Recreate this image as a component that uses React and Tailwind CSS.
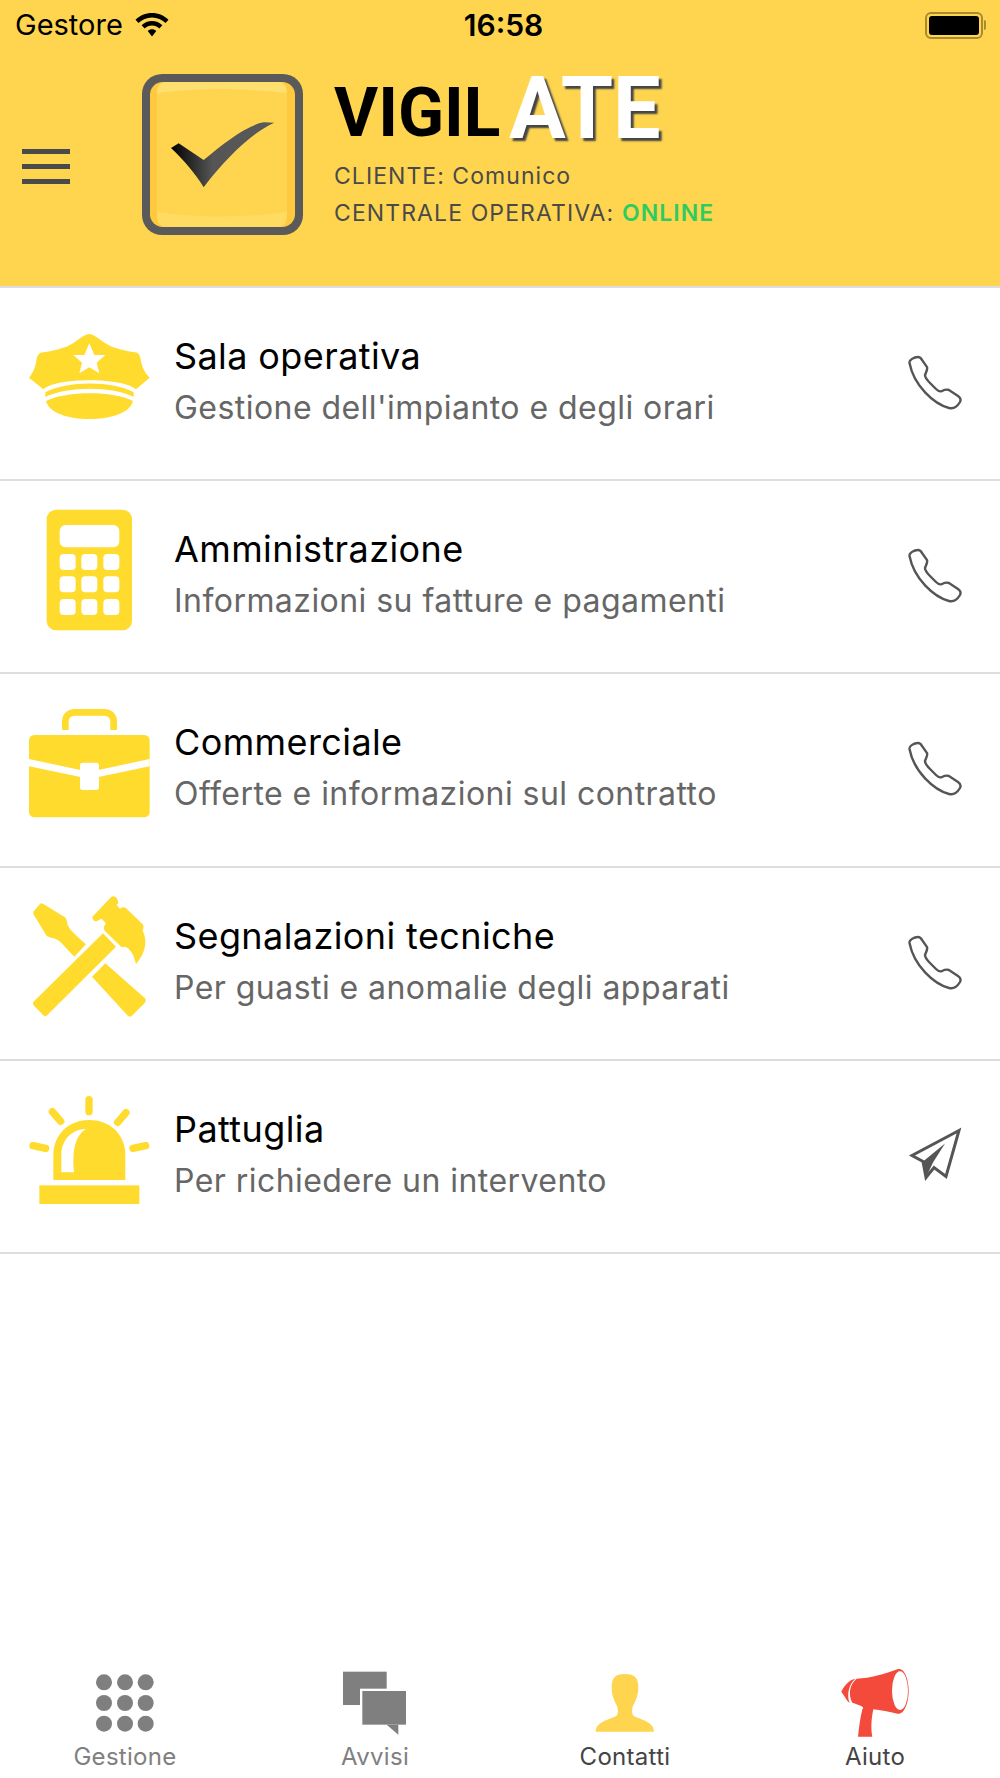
import React from "react";

const YELLOW = "#ffdb2d";

function HatIcon() {
  return (
    <svg width="160" height="160" viewBox="0 -48 480 480">
      <path fill={YELLOW} d="M238 42C225 42 205 60 185 72C165 85 130 92 100 97C88 98 82 105 80 118C76 145 68 160 57 173L100 208C140 172 336 172 378 208L419 173C405 160 395 140 392 118C390 105 385 98 375 97C345 92 310 85 290 72C270 60 250 42 238 42Z" />
      <polygon fill="#fff" points="238,70 253,105 286,105 260,128 268,160 238,142 208,160 216,128 190,105 223,105" />
      <path fill={YELLOW} d="M106 217C170 182 310 182 371 217V231C310 198 170 198 106 231Z" />
      <path fill={YELLOW} d="M108 243C170 212 310 212 369 243C360 280 300 297 238 297C175 297 118 280 108 243Z" />
    </svg>
  );
}

function CalculatorIcon() {
  const keys = [];
  [702, 769, 837].forEach((y) => {
    [149, 214, 280].forEach((x) => {
      keys.push(<rect key={`${x}-${y}`} x={x} y={y} width="48" height="48" rx="12" fill="#fff" />);
    });
  });
  return (
    <svg width="160" height="160" viewBox="0 531 480 480">
      <rect x="110" y="569" width="256" height="362" rx="28" fill={YELLOW} />
      <rect x="149" y="615" width="179" height="67" rx="18" fill="#fff" />
      {keys}
    </svg>
  );
}

function BriefcaseIcon() {
  return (
    <svg width="160" height="160" viewBox="0 0 480 480">
      <path fill="none" stroke={YELLOW} strokeWidth="20" d="M166 120V95C166 75 180 67 195 67H282C298 67 311 75 311 95V120" />
      <rect x="57" y="135" width="362" height="247" rx="16" fill={YELLOW} />
      <polygon fill="#fff" points="57,207 215,241 215,262 57,229" />
      <polygon fill="#fff" points="419,207 262,241 262,262 419,229" />
      <rect x="210" y="218" width="57" height="82" rx="8" fill="#fff" />
    </svg>
  );
}

function ToolsIcon() {
  return (
    <svg width="160" height="160" viewBox="0 579 480 480">
      <path fill={YELLOW} d="M70 665L90 642Q95 638 100 642L165 682Q172 690 172 700C175 715 185 725 228 763L193 800L155 760C140 745 130 745 118 742Q108 738 105 730L70 672Z" />
      <path fill={YELLOW} d="M286 820L405 925Q410 932 405 938L365 978Q358 982 352 976L246 860Z" />
      <path fill={YELLOW} d="M279 730L318 770L112 975Q106 982 100 976L72 947Q66 940 72 934Z" />
      <path fill={YELLOW} d="M250 690Q245 682 250 677L303 622Q310 615 318 622L324 632Q326 640 320 645L330 656Q340 648 350 656L398 703Q403 710 398 722C412 750 410 785 378 822C370 790 360 775 345 770L335 772L284 722Q278 712 288 700L274 686L262 693Q255 696 250 690Z" />
    </svg>
  );
}

function SirenIcon() {
  return (
    <svg width="160" height="160" viewBox="0 -12 480 480">
      <path fill={YELLOW} d="M130 300V225C130 160 180 120 238 120C296 120 346 160 346 225V300Z" />
      <path fill="#fff" d="M154 277V225C154 180 185 148 228 147C200 165 185 200 192 277Z" />
      <rect x="88" y="316" width="300" height="56" fill={YELLOW} />
      <g stroke={YELLOW} strokeWidth="22" strokeLinecap="round">
        <line x1="237" y1="59" x2="237" y2="95" />
        <line x1="127" y1="95" x2="152" y2="124" />
        <line x1="348" y1="98" x2="323" y2="127" />
        <line x1="69" y1="197" x2="107" y2="205" />
        <line x1="407" y1="197" x2="369" y2="205" />
      </g>
    </svg>
  );
}

function PhoneIcon() {
  return (
    <svg width="80" height="80" viewBox="0 0 80 80" fill="none" stroke="#555" strokeWidth="2.4">
      <path d="M19.5 23C19 20 24 17 28 17C30 17 31 18 32 20L37 27C38 29 36 32 35 35C35 38 37 40 40 43L46 49C48 51 50 52 52 51C54 50 56 49 59 50L68 56C71 58 71 60 70 62C67 67 63 69 59 68C44 64 24 46 19.5 23Z" />
    </svg>
  );
}

function PlaneIcon() {
  return (
    <svg width="80" height="80" viewBox="0 2.5 80 80" fill="none" stroke="#555" strokeWidth="3" strokeLinejoin="miter">
      <path d="M69 20L22 45L33 51L36 67L44 57L56 66Z" />
      <path fill="#555" stroke="none" d="M33 51L55 33L43 52L36 67Z" />
    </svg>
  );
}

function Logo() {
  return (
    <svg width="161" height="161" viewBox="65 42 483 483" className="shrink-0">
      <defs>
        <linearGradient id="tick" x1="0" y1="0" x2="1" y2="0">
          <stop offset="0" stopColor="#000" />
          <stop offset="0.4" stopColor="#555" />
          <stop offset="1" stopColor="#5a5a5a" />
        </linearGradient>
      </defs>
      <rect x="65" y="42" width="483" height="483" rx="60" fill="#5a5a5a" />
      <rect x="89" y="66" width="435" height="435" rx="38" fill="#ffc93f" />
      <rect x="110" y="66" width="390" height="435" rx="24" fill="#ffd54f" />
      <path fill="#ffdf70" d="M110 100C112 80 120 67 135 67H475C490 67 498 80 500 100C400 84 210 84 110 100Z" />
      <path fill="#ffdb62" d="M110 455C210 474 400 474 500 455C498 485 490 500 470 500H135C120 500 112 485 110 455Z" />
      <path fill="url(#tick)" d="M152 264L175 250L250 300C310 250 380 195 430 187L462 188C400 215 320 290 250 382C225 340 190 300 152 264Z" />
    </svg>
  );
}

function WifiIcon() {
  return (
    <svg width="34" height="24" viewBox="0 0 34 24" fill="#000">
      <path d="M17 0C10.5 0 4.8 2.6 0.5 6.8L3.5 10C7 6.6 11.8 4.4 17 4.4C22.2 4.4 27 6.6 30.5 10L33.5 6.8C29.2 2.6 23.5 0 17 0Z" />
      <path d="M17 8C13 8 9.4 9.6 6.6 12.2L9.7 15.5C11.6 13.7 14.2 12.5 17 12.5C19.8 12.5 22.4 13.7 24.3 15.5L27.4 12.2C24.6 9.6 21 8 17 8Z" />
      <path d="M17 16.2C15.3 16.2 13.9 16.8 12.7 17.9L17 23.5L21.3 17.9C20.1 16.8 18.7 16.2 17 16.2Z" />
    </svg>
  );
}

function StatusBar() {
  return (
    <div className="flex h-[50px] items-center justify-between pl-[15px] pr-[14px] text-[29px] text-black">
      <div className="flex flex-1 items-center gap-[12px]">
        <span>Gestore</span>
        <WifiIcon />
      </div>
      <span className="ml-[6px] text-[30px] font-semibold">16:58</span>
      <div className="flex flex-1 items-center justify-end">
        <div className="flex h-[27px] w-[58px] items-center rounded-[6px] border-2 border-[#a88a30] p-[2px]">
          <div className="h-full w-full rounded-[3px] bg-black" />
        </div>
        <div className="ml-[1px] h-[10px] w-[2px] rounded-r bg-[#a88a30]" />
      </div>
    </div>
  );
}

function Header() {
  return (
    <header className="h-[288px] border-b-2 border-[#dddddd] bg-[#ffd54f]">
      <StatusBar />
      <div className="mt-[24px] flex items-start pl-[22px]">
        <div className="mt-[75px] flex w-[48px] flex-col gap-[10px]">
          <div className="h-[5px] bg-[#4a4a4a]" />
          <div className="h-[5px] bg-[#4a4a4a]" />
          <div className="h-[5px] bg-[#4a4a4a]" />
        </div>
        <div className="ml-[72px]">
          <Logo />
        </div>
        <div className="ml-[31px] flex flex-col">
          <div className="flex h-[72px] items-end [font-family:Roboto,sans-serif] font-bold">
            <span className="inline-block w-[175px] origin-left scale-x-[0.98] text-[69px] leading-[67px] text-black">VIGIL</span>
            <span className="inline-block w-[153px] origin-left scale-x-[0.96] text-[88px] leading-[76px] text-white [text-shadow:3px_3px_2px_#444]">ATE</span>
          </div>
          <div className="mt-[15px] text-[23px] leading-[30px] tracking-[1.05px] text-[#4a4a4a]">CLIENTE: Comunico</div>
          <div className="mt-[7px] text-[23px] leading-[30px] tracking-[1.1px] text-[#4a4a4a]">
            CENTRALE OPERATIVA: <span className="font-semibold text-[#2ecc60]">ONLINE</span>
          </div>
        </div>
      </div>
    </header>
  );
}

const rows = [
  { title: "Sala operativa", sub: "Gestione dell'impianto e degli orari", icon: <HatIcon />, action: <PhoneIcon /> },
  { title: "Amministrazione", sub: "Informazioni su fatture e pagamenti", icon: <CalculatorIcon />, action: <PhoneIcon /> },
  { title: "Commerciale", sub: "Offerte e informazioni sul contratto", icon: <BriefcaseIcon />, action: <PhoneIcon /> },
  { title: "Segnalazioni tecniche", sub: "Per guasti e anomalie degli apparati", icon: <ToolsIcon />, action: <PhoneIcon /> },
  { title: "Pattuglia", sub: "Per richiedere un intervento", icon: <SirenIcon />, action: <PlaneIcon /> },
];

function Row({ title, sub, icon, action }) {
  return (
    <div className="flex h-[193.2px] items-center border-b-2 border-[#dddddd] pl-[10px] pr-[30px]">
      <div className="shrink-0">{icon}</div>
      <div className="ml-[4px] flex-1 pb-[3px]">
        <div className="text-[36px] leading-[52px] tracking-[0.4px] text-black">{title}</div>
        <div className="text-[32px] leading-[52px] tracking-[0.45px] text-[#666666]">{sub}</div>
      </div>
      <div className="mb-[7px] shrink-0">{action}</div>
    </div>
  );
}

function Tab({ label, color, children }) {
  return (
    <div className="flex flex-1 flex-col items-center">
      {children}
      <span className={`mt-[2px] text-[24px] leading-[30px] tracking-[0.3px] ${color}`}>{label}</span>
    </div>
  );
}

function TabBar() {
  const dots = [];
  [97, 159, 221].forEach((y) => {
    [162, 225, 287].forEach((x) => {
      dots.push(<circle key={`${x}-${y}`} cx={x} cy={y} r="24" fill="#7f7f7f" />);
    });
  });
  return (
    <nav className="flex h-[120px] bg-white pt-[7px]">
      <Tab label="Gestione" color="text-[#808080]">
        <svg width="100" height="75" viewBox="75 45 300 225">{dots}</svg>
      </Tab>
      <Tab label="Avvisi" color="text-[#808080]">
        <svg width="100" height="75" viewBox="825 45 300 225">
          <rect x="879" y="65" width="131" height="100" fill="#7f7f7f" />
          <rect x="930" y="116" width="145" height="115" fill="#fff" />
          <rect x="937" y="123" width="131" height="101" fill="#7f7f7f" />
          <polygon points="1010,224 1045,254 1045,224" fill="#7f7f7f" />
        </svg>
      </Tab>
      <Tab label="Contatti" color="text-[#444444]">
        <svg width="100" height="75" viewBox="75 45 300 225">
          <path fill="#ffd54f" d="M224 72C195 72 185 85 185 110C185 140 195 155 202 170C205 185 205 195 195 200C170 210 137 218 137 245H312C312 218 280 210 255 200C245 195 245 185 248 170C255 155 265 140 265 110C265 85 255 72 224 72Z" />
        </svg>
      </Tab>
      <Tab label="Aiuto" color="text-[#444444]">
        <svg width="100" height="75" viewBox="823 45 300 225">
          <path fill="#f44a3c" d="M914 86C894 90 880 108 872 125C880 135 885 148 897 160C888 135 893 105 914 86Z" />
          <path fill="#f44a3c" d="M1040 58C1000 72 960 85 918 86C895 105 893 135 905 158C925 165 945 170 935 178C928 205 925 235 922 260H965C960 235 962 205 968 178C990 180 1015 186 1040 191C1060 195 1074 160 1074 122C1074 85 1060 50 1040 58Z" />
          <ellipse cx="1048" cy="122" rx="24" ry="58" fill="#fff" />
        </svg>
      </Tab>
    </nav>
  );
}

export default function App() {
  return (
    <div className="flex min-h-[1778px] flex-col bg-white [font-family:Inter,sans-serif]">
      <Header />
      <main className="flex-1">
        {rows.map((row) => (
          <Row key={row.title} {...row} />
        ))}
      </main>
      <TabBar />
    </div>
  );
}
